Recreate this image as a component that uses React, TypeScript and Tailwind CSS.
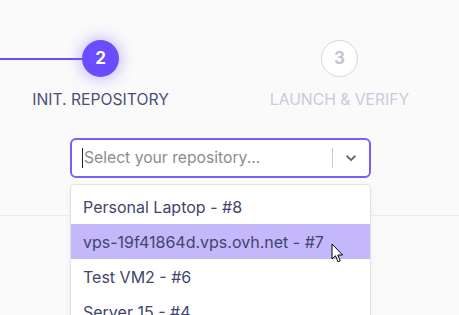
import React from "react";

function Cursor() {
  return (
    <svg width="14" height="21" viewBox="0 0 14 21" className="absolute left-[331px] top-[243px]">
      <path d="M1 1 L1 16 L4.5 12.8 L7 18.8 L9.3 17.8 L6.9 12 L11.6 12 Z" fill="#ffffff" stroke="#000000" strokeWidth="1" strokeLinejoin="round" />
    </svg>
  );
}

export default function App() {
  const items = [
    { label: "Personal Laptop - #8", active: false },
    { label: "vps-19f41864d.vps.ovh.net - #7", active: true },
    { label: "Test VM2 - #6", active: false },
    { label: "Server 15 - #4", active: false },
  ];
  return (
    <div className="relative w-[459px] h-[315px] overflow-hidden bg-[#fafafa]" style={{ fontFamily: "Inter, 'Noto Sans', sans-serif" }}>
      <div className="h-[216px] border-b border-[#ececec] pt-[40px]">
        <div className="flex ml-[-19px]">
          <div className="w-[240px] flex flex-col items-center">
            <div className="flex items-center w-full">
              <div className="flex-1 h-[2px] bg-[#6c4cff]" />
              <div className="w-[37px] h-[37px] rounded-full bg-[#6b4cff] flex items-center justify-center text-white text-[17px] font-bold shadow-[0_0_14px_3px_rgba(120,90,255,0.35)]">2</div>
              <div className="flex-1" />
            </div>
            <div className="mt-[13px] text-[15.7px] leading-[20px] text-[#4b5075]">INIT. REPOSITORY</div>
          </div>
          <div className="w-[240px] flex flex-col items-center">
            <div className="flex items-center w-full">
              <div className="flex-1" />
              <div className="w-[37px] h-[37px] rounded-full bg-white border border-[#d6d6e2] flex items-center justify-center text-[#c3c4d6] text-[17px] font-bold">3</div>
              <div className="flex-1" />
            </div>
            <div className="mt-[13px] text-[15.7px] leading-[20px] text-[#c9cadd]">LAUNCH &amp; VERIFY</div>
          </div>
        </div>
        <div className="ml-[70px] mt-[28px] w-[301px] h-[40px] rounded-[6px] border-2 border-[#7b5cff] bg-white flex items-center">
          <div className="flex-1 flex items-center pl-[10px]">
            <div className="w-px h-[20px] bg-[#222]" />
            <span className="text-[15.7px] text-[#8c8c8c] ml-[1px]">Select your repository...</span>
          </div>
          <div className="w-px h-[20px] bg-[#cccccc]" />
          <div className="w-[36px] flex items-center justify-center">
            <svg width="14" height="14" viewBox="0 0 20 20">
              <path d="M4.5 7.5 L10 13 L15.5 7.5" fill="none" stroke="#666" strokeWidth="2.6" strokeLinecap="round" strokeLinejoin="round" />
            </svg>
          </div>
        </div>
      </div>
      <div className="absolute left-[70px] top-[184px] w-[301px] bg-white border border-[#e2e2e2] rounded-[5px] shadow-[0_2px_6px_rgba(0,0,0,0.06)] pt-[4px] h-[160px]">
        {items.map((it) => (
          <div key={it.label} className={`h-[35px] flex items-center pl-[12px] text-[16px] text-[#41456b] ${it.active ? "bg-[#c4b8fb]" : ""}`}>
            {it.label}
          </div>
        ))}
      </div>
      <Cursor />
    </div>
  );
}
